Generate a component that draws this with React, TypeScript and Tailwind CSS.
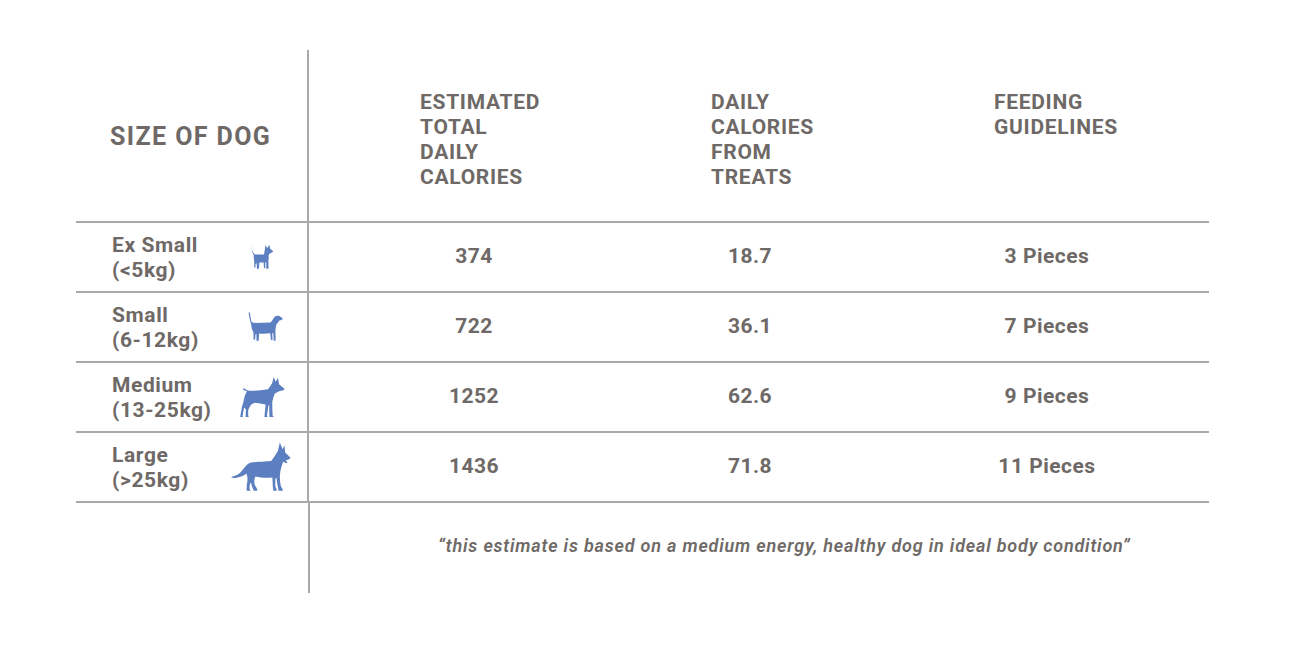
const rows = [
  { name: 'Ex Small', range: '(<5kg)', total: '374', treats: '18.7', pieces: '3 Pieces', dog: 'xs', shift: 'ml-[3px]' },
  { name: 'Small', range: '(6-12kg)', total: '722', treats: '36.1', pieces: '7 Pieces', dog: 'sm', shift: 'ml-[9px]' },
  { name: 'Medium', range: '(13-25kg)', total: '1252', treats: '62.6', pieces: '9 Pieces', dog: 'md', shift: 'ml-[4px]' },
  { name: 'Large', range: '(>25kg)', total: '1436', treats: '71.8', pieces: '11 Pieces', dog: 'lg', shift: 'ml-[1px]' },
];

function Dog({ kind }: { kind: string }) {
  if (kind === 'xs') {
    return (
      <svg viewBox="0 0 24 26" className="w-[24px] h-[26px] fill-[#5b7fc0]">
        <path d="M2 1 C1.2 3 1.6 6 3.5 9 C4.2 10.2 5 10.6 6 10.6 L14 10.4 C14.4 8.5 14.6 6.5 15 5 L15.2 1.2 L17.3 4 L19.4 1 L20.3 5 C21.5 5.8 22.8 6.5 23.2 7.4 C22 8.6 20.6 9 19.6 9.4 L18.6 11.5 C18.8 13 18.7 15 18.4 16.6 L18.6 24.6 L16.4 25 L16.2 18.2 L15.2 18.4 L15.4 24 L14 24.2 L13.6 18.4 L9.4 18.4 L8.8 24.8 L7 25 L6.6 19 L5.6 20 L5.4 23.6 L4.2 23.8 L4.3 17.4 C3.8 15.6 3.6 13.6 3.8 11.4 C2.2 8.8 1.2 5 2 1 Z" />
      </svg>
    );
  }
  if (kind === 'sm') {
    return (
      <svg viewBox="0 0 36 30" className="w-[36px] h-[30px] fill-[#5b7fc0]">
        <path d="M2.6 0.2 C3.4 3 3.8 7 4.4 9.6 C5.2 10.6 6.5 11 8 11 L23.5 10.4 C24.8 9.2 26 7 27 5.4 C28.5 3.9 30.6 3.4 32.2 4 C33.6 4.9 34.8 5.8 35.8 6.6 C35.4 7.8 33.8 8.4 32.4 8.6 C31.4 9.6 30.4 11.4 29.4 12.6 C28.8 14.4 28.6 16.6 28.4 18.6 L28.6 28.6 L26.8 29 L26.2 21 L25.2 21.2 L25.6 28 L24 28.2 L23.2 21.2 C19 21.8 15 21.8 12.2 21.4 L11.6 28.8 L9.6 29 L9.4 22 L8.4 22.6 L8.2 27.6 L6.6 27.8 L6.4 20.2 C5.2 18.4 4.2 15.8 4.2 12.6 C3.2 9.8 2.2 5 1.6 0.6 Z" />
      </svg>
    );
  }
  if (kind === 'md') {
    return (
      <svg viewBox="0 0 46 40" className="w-[46px] h-[40px] fill-[#5b7fc0]">
        <path d="M4 12.2 L5 11.2 L8.6 13.6 C15 14.2 22 13.6 29 12.3 C30.6 10.2 32 8 33.3 5.7 L34.7 0 L36.7 4.7 L39 0.7 L40 7.3 C42 9 44.2 10.6 45.7 12.3 C44.6 13.6 42.6 14 40.7 14 C39 14.8 37.2 15.6 35.7 16.7 C34.6 19.4 33.8 22 33.3 24.7 C33.2 29.4 33.4 34.2 33.6 38.6 L34.8 40 L30.4 40 L30.2 28.2 L29.4 28.4 L28 38.6 L28.6 40 L25.4 40 L26.6 27.4 C23 26.6 19.4 26 15.7 25.7 C14.4 26.4 13.2 27 12.3 27.4 C10.8 29.4 9.6 31.4 9.2 33.4 L9.2 39 L10 40 L6.6 40 L7 32.6 L5 30.6 L3.6 39 L4.2 40 L1.2 40 L2.8 30.6 C4 26.8 5 23 5.7 19 C6.4 17.2 7.4 15.6 8 14.2 L4 12.8 Z" />
      </svg>
    );
  }
  return (
    <svg viewBox="0 0 60 50" className="w-[60px] h-[50px] fill-[#5b7fc0]">
      <path d="M0.4 35 C4 34.2 8 32.4 10.4 29.6 C13 26 15.4 22.4 19 20.8 C25 19.6 33 19.8 40.2 19 C42.8 15.8 45.2 12.2 47 8.6 L48.8 0.4 L51.6 7.2 L53.4 3.2 L54.2 10.4 C56.2 12.2 58.2 14.2 59.6 15.8 C58.6 17.4 56.6 18.2 54.8 18.2 L56.6 21 C55 21.2 53.6 20.4 52.4 19.4 C51 22.4 50 26 49.2 30.4 C48.6 34.6 48.8 39.4 49.8 44 L51.8 47.4 L51.6 48.8 L47.6 48.8 L46.6 43.6 L45.4 36 L44.4 36.4 L44.2 44 L45.8 47.8 L45.4 48.8 L42.2 48.8 L41.8 44 L41.4 35.4 C35.4 36.4 29.6 35.6 24.4 34.4 C23.2 37.2 23 40.2 23.8 43 C25.2 45 26 46.4 26.4 48 L25.8 48.8 L22.8 48.8 C21.4 46 20.4 43 19.8 40.2 L18.6 43.4 L18.6 47.2 L19.6 48.4 L19.2 48.8 L15.6 48.8 L15.8 42.4 C16.8 38.8 16.8 35 15.4 31.6 C13 33.6 9.4 35.2 5.6 35.8 C3.6 36.2 1.6 36.2 0.4 35.6 Z" />
    </svg>
  );
}

export default function App() {
  return (
    <div className="w-[1296px] h-[658px] bg-white text-[#6e6966] font-['Roboto','Liberation_Sans',sans-serif] pt-[50px] pl-[76px]">
      <div className="w-[1133px]">
        {/* Header */}
        <div className="flex h-[173px] border-b-2 border-[#a9a9a9]">
          <div className="w-[234px] border-r-2 border-[#a9a9a9] flex items-center pl-[34px] pt-[2px]">
            <span className="text-[25px] font-bold tracking-[1.4px]">SIZE OF DOG</span>
          </div>
          <div className="grid grid-cols-[328px_226px_346px] pt-[40px] text-[21px] leading-[25px] font-bold tracking-[0.7px]">
            <div className="pl-[111px]">ESTIMATED<br />TOTAL<br />DAILY<br />CALORIES</div>
            <div className="pl-[74px]">DAILY<br />CALORIES<br />FROM<br />TREATS</div>
            <div className="pl-[131px]">FEEDING<br />GUIDELINES</div>
          </div>
        </div>

        {/* Rows */}
        {rows.map((r) => (
          <div key={r.name} className="flex h-[70px] border-b-2 border-[#a9a9a9]">
            <div className="w-[234px] border-r-2 border-[#a9a9a9] flex items-center justify-between pl-[36px] pr-[16px]">
              <div className="text-[21px] leading-[25px] font-bold tracking-[0.6px] pt-[1px]">
                {r.name}
                <br />
                {r.range}
              </div>
              <div className="w-[62px] flex justify-center">
                <div className={r.shift}>
                  <Dog kind={r.dog} />
                </div>
              </div>
            </div>
            <div className="grid grid-cols-[328px_226px_346px] items-center text-[21px] font-bold tracking-[0.5px]">
              <div className="flex justify-center pl-[2px]">{r.total}</div>
              <div className="flex justify-center">{r.treats}</div>
              <div className="flex justify-center pl-[22px]">{r.pieces}</div>
            </div>
          </div>
        ))}

        {/* Footer */}
        <div className="flex h-[90px]">
          <div className="w-[234px] border-r-2 border-[#a9a9a9]" />
          <div className="w-[900px] flex justify-center pt-[31px] pl-[50px]">
            <span className="text-[18px] leading-[24px] italic font-semibold tracking-[0.8px]">
              “this estimate is based on a medium energy, healthy dog in ideal body condition”
            </span>
          </div>
        </div>
      </div>
    </div>
  );
}
